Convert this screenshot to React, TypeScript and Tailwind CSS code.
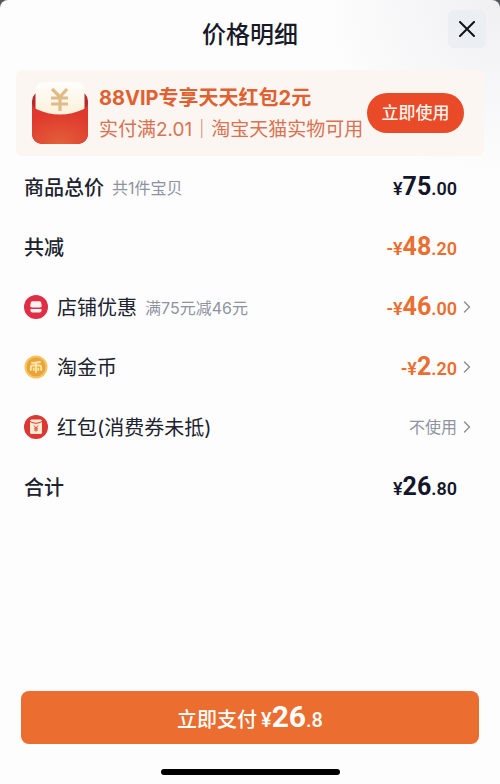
import React from "react";
import { ChevronRight } from "lucide-react";

type Tone = "dark" | "orange";

function Price({ value, tone = "dark", minus = false }: { value: string; tone?: Tone; minus?: boolean }) {
  const [whole, cents] = value.split(".");
  return (
    <span
      className={
        "flex items-baseline whitespace-nowrap pt-0.5 font-['Roboto','Noto_Sans_CJK_SC',sans-serif] leading-8 " +
        (tone === "orange" ? "text-[#ea6e2f]" : "text-[#14172a]")
      }
    >
      <span className="text-lg font-semibold leading-8">{minus ? "-¥" : "¥"}</span>
      <span className="text-[25px] font-bold leading-8">{whole}</span>
      <span className="text-lg font-semibold leading-8">.{cents}</span>
    </span>
  );
}

function ShopIcon() {
  return (
    <svg viewBox="0 0 24 24" className="size-6 shrink-0" aria-hidden="true">
      <circle cx="12" cy="12" r="12" fill="#e02f45" />
      <path d="M8.5 6.3h7q1.300 0 1.600 1.300l.6 3q.2 1.900-1.700 1.900H8q-1.900 0-1.700-1.900l.6-3Q7.200 6.300 8.500 6.300Z" fill="#fff3f2" />
      <path d="M6.500 14h11v1.500q0 2-2 2h-7q-2 0-2-2Z" fill="#fff3f2" />
    </svg>
  );
}

function CoinIcon() {
  return (
    <svg viewBox="0 0 24 24" className="size-6 shrink-0" aria-hidden="true">
      <circle cx="12" cy="12" r="11.5" fill="#f6c560" />
      <circle cx="12" cy="12" r="9.5" fill="#e9a23c" />
      <path
        d="M8 7.800q4 .2 8-.8M6.800 15v-2.500q0-2 2-2h6.400q2 0 2 2V15M12 8v9M9.700 13.500v1.500M14.300 13.500v1.500"
        fill="none"
        stroke="#ffe7a3"
        strokeWidth="1.900"
        strokeLinecap="round"
      />
    </svg>
  );
}

function PacketIcon() {
  return (
    <svg viewBox="0 0 24 24" className="size-6 shrink-0" aria-hidden="true">
      <circle cx="12" cy="12" r="12" fill="#dc3733" />
      <rect x="6" y="4.5" width="12" height="14.5" rx="1.5" fill="#ffebd2" />
      <path d="M6 6.5q6 3.5 12 0" fill="none" stroke="#dc3733" strokeWidth="1" />
      <path d="m10 10.5 2 2.5 2-2.5M12 13v3.5M10 13.2h4M10 15h4" fill="none" stroke="#d95147" strokeWidth="1" />
    </svg>
  );
}

function Envelope() {
  return (
    <svg viewBox="0 0 56 62" className="h-[62px] w-14 shrink-0" aria-hidden="true">
      <defs>
        <radialGradient id="pocket" cx="0.5" cy="1" r="0.8">
          <stop offset="0" stopColor="#e2603a" />
          <stop offset="1" stopColor="#df382d" />
        </radialGradient>
        <linearGradient id="slip" x1="0" y1="0" x2="0" y2="1">
          <stop offset="0" stopColor="#fffefc" />
          <stop offset="1" stopColor="#fcefd5" />
        </linearGradient>
      </defs>
      <rect y="9" width="56" height="53" rx="10" fill="#b9282b" />
      <path d="M3.5 36V9q0-9 9-9h31q9 0 9 9v27Z" fill="url(#slip)" />
      <path d="M0 21q1 4 4 6 24 11 48 0 3-2 4-6v29q0 12-12 12H12Q0 62 0 50Z" fill="url(#pocket)" />
      <path d="m20 7 8 8 7-8M19 16h17M19 22h17M28 15v14" fill="none" stroke="#e1bb87" strokeWidth="3.2" />
    </svg>
  );
}

type RowProps = {
  label: string;
  note?: string;
  icon?: React.ReactNode;
  strong?: boolean;
  link?: boolean;
  children: React.ReactNode;
};

function Row({ label, note, icon, strong = false, link = false, children }: RowProps) {
  const content = (
    <>
      <span className="flex items-center gap-[9px]">
        {icon}
        <span className="flex items-center gap-2 whitespace-nowrap pt-0.5">
          <span className={strong ? "text-xl font-medium" : "text-xl"}>{label}</span>
          {note && <span className="text-base text-[#8e939e]">{note}</span>}
        </span>
      </span>
      <span className="flex items-center">
        {children}
        {link ? (
          <ChevronRight className="-mr-1 size-5 text-[#8e9096]" strokeWidth={1.8} aria-hidden="true" />
        ) : (
          <span className="w-4" />
        )}
      </span>
    </>
  );
  return (
    <li>
      {link ? (
        <button type="button" className="flex h-[60px] w-full items-center justify-between text-left">
          {content}
        </button>
      ) : (
        <div className="flex h-[60px] items-center justify-between">{content}</div>
      )}
    </li>
  );
}

export default function App() {
  return (
    <div className="min-h-screen bg-[#55565a]">
      <main className="flex min-h-screen flex-col rounded-t-lg bg-[#fdfdfe] bg-[radial-gradient(circle_at_top_right,#f0f0f2_0,#fdfdfe_180px)] font-['Inter','Noto_Sans_CJK_SC',sans-serif] text-[#20222d]">
        <header className="grid h-[70px] grid-cols-[1fr_auto_1fr] px-3.5">
          <h1 className="col-start-2 self-center text-2xl font-medium text-[#181a29]">价格明细</h1>
          <button
            type="button"
            aria-label="关闭"
            className="mt-2.5 flex size-[38px] items-center justify-center self-start justify-self-end rounded-md bg-[#ebeef2]"
          >
            <svg viewBox="0 0 16 16" className="size-4" fill="none" stroke="#111318" strokeWidth="2" strokeLinecap="round" aria-hidden="true">
              <path d="m1 1 14 14M15 1 1 15" />
            </svg>
          </button>
        </header>

        <section className="mx-4 flex h-[86px] items-center rounded-md bg-[#fcf6f3] pl-4 pr-5">
          <Envelope />
          <div className="ml-[11px] min-w-0 flex-1 whitespace-nowrap pt-0.5">
            <p className="text-xl leading-8 font-bold text-[#e0602f]">88VIP专享天天红包2元</p>
            <p className="text-[19px] leading-8 text-[#d97250]">实付满2.01｜淘宝天猫实物可用</p>
          </div>
          <button type="button" className="h-10 w-[97px] shrink-0 rounded-full bg-[#e94a27] pt-0.5 text-[17px] font-medium text-[#fff4ec]">
            立即使用
          </button>
        </section>

        <ul className="pl-6 pr-[27px] pt-px">
          <Row label="商品总价" note="共1件宝贝" strong>
            <Price value="75.00" />
          </Row>
          <Row label="共减" strong>
            <Price value="48.20" tone="orange" minus />
          </Row>
          <Row label="店铺优惠" note="满75元减46元" icon={<ShopIcon />} link>
            <Price value="46.00" tone="orange" minus />
          </Row>
          <Row label="淘金币" icon={<CoinIcon />} link>
            <Price value="2.20" tone="orange" minus />
          </Row>
          <Row label="红包(消费券未抵)" icon={<PacketIcon />} link>
            <span className="text-base text-[#8e939e]">不使用</span>
          </Row>
          <Row label="合计" strong>
            <Price value="26.80" />
          </Row>
        </ul>

        <footer className="mt-auto px-[21px] pb-[9px]">
          <button
            type="button"
            className="flex h-[53px] w-full items-center justify-center rounded-lg bg-[#eb6d2f] text-white"
          >
            <span className="flex items-baseline gap-1">
              <span className="text-xl font-medium">立即支付</span>
              <span className="font-['Roboto','Noto_Sans_CJK_SC',sans-serif] text-xl font-medium">
                ¥<span className="text-[30px] font-bold leading-8">26</span>.8
              </span>
            </span>
          </button>
          <div className="mx-auto mt-[25px] h-1.5 w-[179px] rounded-full bg-black" />
        </footer>
      </main>
    </div>
  );
}
